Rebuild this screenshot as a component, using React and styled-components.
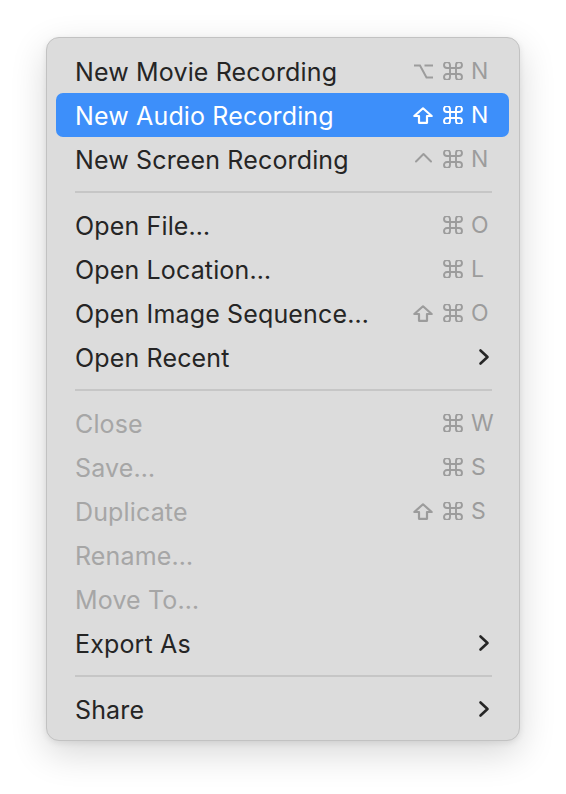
import React from "react";
import styled, { createGlobalStyle } from "styled-components";

const Global = createGlobalStyle`
  html, body { margin: 0; padding: 0; background: #ffffff; }
  body { font-family: Inter, "Noto Sans", "Liberation Sans", sans-serif; -webkit-font-smoothing: antialiased; }
`;

const Page = styled.div`
  width: 566px;
  height: 794px;
  padding: 37px 0 0 46px;
  box-sizing: border-box;
`;

const Menu = styled.div`
  width: 474px;
  box-sizing: border-box;
  padding: 11px 10px 9px 9px;
  background: #dcdcdc;
  border-radius: 13px;
  border: 1px solid #c2c2c2;
  box-shadow: 0 12px 36px rgba(0, 0, 0, 0.16), 0 2px 6px rgba(0, 0, 0, 0.08);
  display: flex;
  flex-direction: column;
`;

const Row = styled.div`
  height: 44px;
  display: flex;
  align-items: center;
  padding: 0 10px 0 19px;
  border-radius: 7px;
  background: ${(p) => (p.$active ? "#3d8ffa" : "transparent")};
  color: ${(p) => (p.$active ? "#ffffff" : p.$disabled ? "#a6a6a6" : "#252525")};
`;

const Label = styled.span`
  flex: 1;
  font-size: 25px;
  letter-spacing: 0.15px;
  white-space: nowrap;
  padding-top: 1px;
`;

const Shortcut = styled.div`
  display: flex;
  align-items: center;
  color: ${(p) => (p.$active ? "#ffffff" : "#9c9c9c")};
`;

const Mods = styled.div`
  display: flex;
  align-items: center;
  justify-content: flex-end;
  gap: 10px;
  margin-right: 8px;
`;

const Key = styled.span`
  width: 28px;
  font-size: 23px;
  line-height: 1;
  display: flex;
  align-items: center;
`;

const Chevron = styled.span`
  width: 21px;
  display: flex;
  align-items: center;
  color: #262626;
`;

const Sep = styled.div`
  height: 22px;
  display: flex;
  align-items: center;
  padding: 0 17px 0 19px;
  &::after {
    content: "";
    flex: 1;
    height: 2px;
    background: #c6c6c6;
  }
`;

const Cmd = () => (
  <svg width="20" height="18" viewBox="2.5 3 19 18" fill="none" stroke="currentColor" strokeWidth="1.9" strokeLinecap="round" strokeLinejoin="round">
    <path d="M15 6v12a3 3 0 1 0 3-3H6a3 3 0 1 0 3 3V6a3 3 0 1 0-3 3h12a3 3 0 1 0-3-3" />
  </svg>
);

const Shift = () => (
  <svg width="20" height="17" viewBox="0 0 20 17" fill="none" stroke="currentColor" strokeWidth="2.2" strokeLinejoin="round">
    <path d="M10 1.3 L18.7 9 H14 V15.8 H6 V9 H1.3 Z" />
  </svg>
);

const Opt = () => (
  <svg width="19" height="17" viewBox="0 0 19 17" fill="none" stroke="currentColor" strokeWidth="2" strokeLinecap="square">
    <path d="M1 2.5 H6 L12.5 14.5 H18" />
    <path d="M11.5 2.5 H18" />
  </svg>
);

const Ctrl = () => (
  <svg width="19" height="17" viewBox="0 0 19 17" fill="none" stroke="currentColor" strokeWidth="2" strokeLinecap="round" strokeLinejoin="round">
    <path d="M2 10.5 L9.5 3 L17 10.5" />
  </svg>
);

const Arrow = () => (
  <svg width="12" height="18" viewBox="0 0 12 18" fill="none" stroke="currentColor" strokeWidth="2.6" strokeLinecap="round" strokeLinejoin="round">
    <path d="M2.5 2.5 L9.5 9 L2.5 15.5" />
  </svg>
);

const MOD = { opt: Opt, cmd: Cmd, shift: Shift, ctrl: Ctrl };

const items = [
  { label: "New Movie Recording", mods: ["opt", "cmd"], key: "N" },
  { label: "New Audio Recording", mods: ["shift", "cmd"], key: "N", active: true },
  { label: "New Screen Recording", mods: ["ctrl", "cmd"], key: "N" },
  { sep: true },
  { label: "Open File…", mods: ["cmd"], key: "O" },
  { label: "Open Location…", mods: ["cmd"], key: "L" },
  { label: "Open Image Sequence…", mods: ["shift", "cmd"], key: "O" },
  { label: "Open Recent", sub: true },
  { sep: true },
  { label: "Close", mods: ["cmd"], key: "W", disabled: true },
  { label: "Save…", mods: ["cmd"], key: "S", disabled: true },
  { label: "Duplicate", mods: ["shift", "cmd"], key: "S", disabled: true },
  { label: "Rename…", disabled: true },
  { label: "Move To…", disabled: true },
  { label: "Export As", sub: true },
  { sep: true },
  { label: "Share", sub: true },
];

export default function App() {
  return (
    <Page>
      <Global />
      <Menu>
        {items.map((it, i) =>
          it.sep ? (
            <Sep key={i} />
          ) : (
            <Row key={i} $active={it.active} $disabled={it.disabled}>
              <Label>{it.label}</Label>
              {it.key && (
                <Shortcut $active={it.active}>
                  <Mods>
                    {it.mods.map((m) => {
                      const C = MOD[m];
                      return <C key={m} />;
                    })}
                  </Mods>
                  <Key>{it.key}</Key>
                </Shortcut>
              )}
              {it.sub && (
                <Chevron>
                  <Arrow />
                </Chevron>
              )}
            </Row>
          )
        )}
      </Menu>
    </Page>
  );
}
